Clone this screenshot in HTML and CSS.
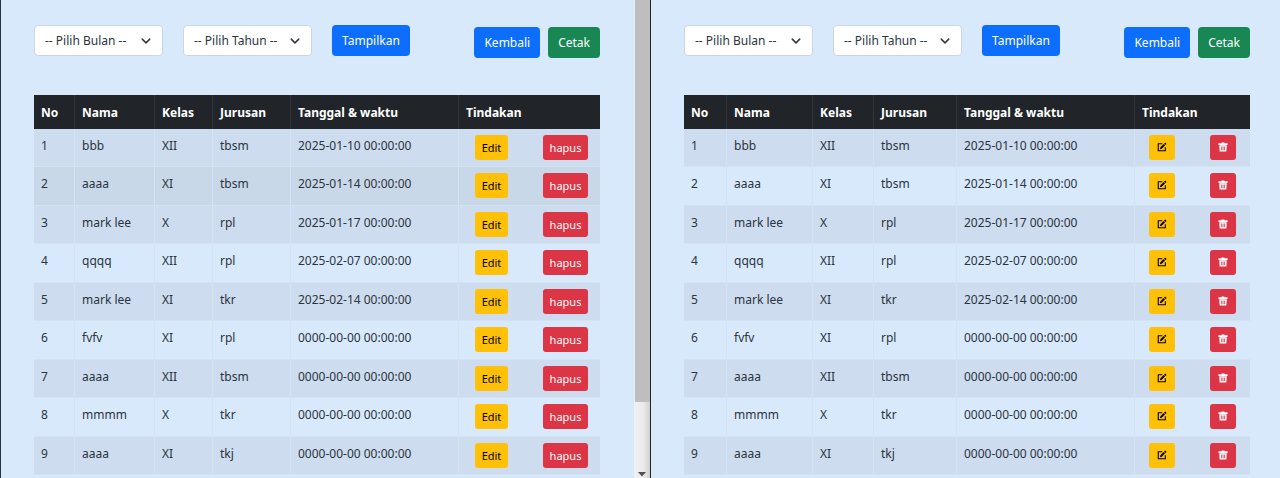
FILE: index.html
```
<!DOCTYPE html>
<html lang="id">
<head>
<meta charset="utf-8">
<title>Data Absensi</title>
<link rel="stylesheet" href="styles.css">
</head>
<body>
<svg class="sprite" aria-hidden="true">
  <symbol id="chevron" viewBox="0 0 16 16"><path d="m2 5 6 6 6-6" fill="none" stroke="#343a40" stroke-width="2.400" stroke-linecap="round" stroke-linejoin="round"/></symbol>
  <symbol id="pencil" viewBox="0 0 24 24"><path d="M12.500 4H3v17h17v-8.500" fill="none" stroke="currentColor" stroke-width="2.600"/><path d="M19.500 1 23 4.500 20.500 7 17 3.500zM16 4.500 19.500 8l-8 8-4.500 1.200L8.200 12.500z" fill="currentColor"/></symbol>
  <symbol id="trash" viewBox="0 0 24 24"><path fill="currentColor" fill-rule="evenodd" d="M9 1h6l1 2h7v4H1V3h7zM3 8h18l-1 15H4zM8 11v9h1.800v-9zm3.200 0v9H13v-9zm3.200 0v9h1.800v-9z"/></symbol>
</svg>
<div class="compare">
  <section class="pane pane-text">
    <main class="content">
      <div class="toolbar">
        <form class="filters">
          <label class="picker"><select aria-label="Bulan"><option>-- Pilih Bulan --</option></select><svg><use href="#chevron"/></svg></label>
          <label class="picker"><select aria-label="Tahun"><option>-- Pilih Tahun --</option></select><svg><use href="#chevron"/></svg></label>
          <button type="button" class="btn primary">Tampilkan</button>
        </form>
        <div class="links"><a href="#" class="btn primary">Kembali</a><a href="#" class="btn success">Cetak</a></div>
      </div>
      <table class="records">
        <colgroup><col class="no"><col class="name"><col class="grade"><col class="major"><col class="time"><col></colgroup>
        <thead><tr><th>No</th><th>Nama</th><th>Kelas</th><th>Jurusan</th><th>Tanggal &amp; waktu</th><th>Tindakan</th></tr></thead>
        <tbody>
          <tr><td>1</td><td>bbb</td><td>XII</td><td>tbsm</td><td>2025-01-10 00:00:00</td><td><div class="actions"><button class="btn small warning">Edit</button><button class="btn small danger">hapus</button></div></td></tr>
          <tr class="hovered"><td>2</td><td>aaaa</td><td>XI</td><td>tbsm</td><td>2025-01-14 00:00:00</td><td><div class="actions"><button class="btn small warning">Edit</button><button class="btn small danger">hapus</button></div></td></tr>
          <tr><td>3</td><td>mark lee</td><td>X</td><td>rpl</td><td>2025-01-17 00:00:00</td><td><div class="actions"><button class="btn small warning">Edit</button><button class="btn small danger">hapus</button></div></td></tr>
          <tr><td>4</td><td>qqqq</td><td>XII</td><td>rpl</td><td>2025-02-07 00:00:00</td><td><div class="actions"><button class="btn small warning">Edit</button><button class="btn small danger">hapus</button></div></td></tr>
          <tr><td>5</td><td>mark lee</td><td>XI</td><td>tkr</td><td>2025-02-14 00:00:00</td><td><div class="actions"><button class="btn small warning">Edit</button><button class="btn small danger">hapus</button></div></td></tr>
          <tr><td>6</td><td>fvfv</td><td>XI</td><td>rpl</td><td>0000-00-00 00:00:00</td><td><div class="actions"><button class="btn small warning">Edit</button><button class="btn small danger">hapus</button></div></td></tr>
          <tr><td>7</td><td>aaaa</td><td>XII</td><td>tbsm</td><td>0000-00-00 00:00:00</td><td><div class="actions"><button class="btn small warning">Edit</button><button class="btn small danger">hapus</button></div></td></tr>
          <tr><td>8</td><td>mmmm</td><td>X</td><td>tkr</td><td>0000-00-00 00:00:00</td><td><div class="actions"><button class="btn small warning">Edit</button><button class="btn small danger">hapus</button></div></td></tr>
          <tr><td>9</td><td>aaaa</td><td>XI</td><td>tkj</td><td>0000-00-00 00:00:00</td><td><div class="actions"><button class="btn small warning">Edit</button><button class="btn small danger">hapus</button></div></td></tr>
        </tbody>
      </table>
    </main>
    <div class="scrollbar"><div class="thumb"></div><svg class="arrow" viewBox="0 0 8 5"><path d="M0 0h8L4 4.500z" fill="#505050"/></svg></div>
  </section>
  <section class="pane pane-icons">
    <main class="content">
      <div class="toolbar">
        <form class="filters">
          <label class="picker"><select aria-label="Bulan"><option>-- Pilih Bulan --</option></select><svg><use href="#chevron"/></svg></label>
          <label class="picker"><select aria-label="Tahun"><option>-- Pilih Tahun --</option></select><svg><use href="#chevron"/></svg></label>
          <button type="button" class="btn primary">Tampilkan</button>
        </form>
        <div class="links"><a href="#" class="btn primary">Kembali</a><a href="#" class="btn success">Cetak</a></div>
      </div>
      <table class="records">
        <colgroup><col class="no"><col class="name"><col class="grade"><col class="major"><col class="time"><col></colgroup>
        <thead><tr><th>No</th><th>Nama</th><th>Kelas</th><th>Jurusan</th><th>Tanggal &amp; waktu</th><th>Tindakan</th></tr></thead>
        <tbody>
          <tr><td>1</td><td>bbb</td><td>XII</td><td>tbsm</td><td>2025-01-10 00:00:00</td><td><div class="actions"><button class="btn icon warning" aria-label="Edit"><svg><use href="#pencil"/></svg></button><button class="btn icon danger" aria-label="Hapus"><svg><use href="#trash"/></svg></button></div></td></tr>
          <tr><td>2</td><td>aaaa</td><td>XI</td><td>tbsm</td><td>2025-01-14 00:00:00</td><td><div class="actions"><button class="btn icon warning" aria-label="Edit"><svg><use href="#pencil"/></svg></button><button class="btn icon danger" aria-label="Hapus"><svg><use href="#trash"/></svg></button></div></td></tr>
          <tr><td>3</td><td>mark lee</td><td>X</td><td>rpl</td><td>2025-01-17 00:00:00</td><td><div class="actions"><button class="btn icon warning" aria-label="Edit"><svg><use href="#pencil"/></svg></button><button class="btn icon danger" aria-label="Hapus"><svg><use href="#trash"/></svg></button></div></td></tr>
          <tr><td>4</td><td>qqqq</td><td>XII</td><td>rpl</td><td>2025-02-07 00:00:00</td><td><div class="actions"><button class="btn icon warning" aria-label="Edit"><svg><use href="#pencil"/></svg></button><button class="btn icon danger" aria-label="Hapus"><svg><use href="#trash"/></svg></button></div></td></tr>
          <tr><td>5</td><td>mark lee</td><td>XI</td><td>tkr</td><td>2025-02-14 00:00:00</td><td><div class="actions"><button class="btn icon warning" aria-label="Edit"><svg><use href="#pencil"/></svg></button><button class="btn icon danger" aria-label="Hapus"><svg><use href="#trash"/></svg></button></div></td></tr>
          <tr><td>6</td><td>fvfv</td><td>XI</td><td>rpl</td><td>0000-00-00 00:00:00</td><td><div class="actions"><button class="btn icon warning" aria-label="Edit"><svg><use href="#pencil"/></svg></button><button class="btn icon danger" aria-label="Hapus"><svg><use href="#trash"/></svg></button></div></td></tr>
          <tr><td>7</td><td>aaaa</td><td>XII</td><td>tbsm</td><td>0000-00-00 00:00:00</td><td><div class="actions"><button class="btn icon warning" aria-label="Edit"><svg><use href="#pencil"/></svg></button><button class="btn icon danger" aria-label="Hapus"><svg><use href="#trash"/></svg></button></div></td></tr>
          <tr><td>8</td><td>mmmm</td><td>X</td><td>tkr</td><td>0000-00-00 00:00:00</td><td><div class="actions"><button class="btn icon warning" aria-label="Edit"><svg><use href="#pencil"/></svg></button><button class="btn icon danger" aria-label="Hapus"><svg><use href="#trash"/></svg></button></div></td></tr>
          <tr><td>9</td><td>aaaa</td><td>XI</td><td>tkj</td><td>0000-00-00 00:00:00</td><td><div class="actions"><button class="btn icon warning" aria-label="Edit"><svg><use href="#pencil"/></svg></button><button class="btn icon danger" aria-label="Hapus"><svg><use href="#trash"/></svg></button></div></td></tr>
        </tbody>
      </table>
    </main>
  </section>
</div>
</body>
</html>
```

FILE: styles.css
```
* { box-sizing: border-box; }

body {
  margin: 0;
  background: #d9e9fc;
  color: #2b3540;
  font: 12px/20px "Noto Sans", "Open Sans", sans-serif;
}

button, select { font: inherit; color: inherit; }

.sprite { display: none; }

.compare {
  display: grid;
  grid-template-columns: 651fr 629fr;
  min-height: 100vh;
}

.pane { display: flex; min-width: 0; }
.pane-text { border-left: 1px solid #25323f; border-right: 1px solid #202428; }

.content { flex: 1; min-width: 0; padding: 25px 34px 0 33px; }
.pane-icons .content { padding-right: 30px; }

.toolbar {
  display: flex;
  justify-content: space-between;
  align-items: flex-start;
  margin-bottom: 37px;
}

.filters { display: flex; gap: 20px; }
.links { display: flex; gap: 8px; padding-top: 2px; }

.picker { position: relative; display: block; }

.picker select {
  appearance: none;
  display: block;
  width: 129px;
  height: 31px;
  padding: 0 28px 0 10px;
  border: 1px solid #cbd6e2;
  border-radius: 4px;
  background: #fff;
}

.picker svg {
  position: absolute;
  right: 12px;
  top: 11px;
  width: 10px;
  height: 10px;
  pointer-events: none;
}

.btn {
  display: flex;
  align-items: center;
  justify-content: center;
  height: 31px;
  padding: 0 10px;
  border: 0;
  border-radius: 4px;
  color: #fff;
  text-decoration: none;
}

.primary { background: #0d6efd; }
.success { background: #198754; }
.danger { background: #dc3545; }
.warning { background: #ffc107; color: #000; }

.small { height: 25px; padding: 0; border-radius: 3px; font-size: 11px; }
.small.warning { width: 33px; }
.small.danger { width: 45px; }

.icon { width: 26px; height: 25px; padding: 0 0 2px; border-radius: 3px; }
.icon svg { width: 10px; height: 10px; }

.records {
  width: 100%;
  table-layout: fixed;
  border-spacing: 0;
}

.no { width: 41px; }
.name { width: 80px; }
.grade { width: 58px; }
.major { width: 78px; }
.time { width: 168px; }

.pane-icons .no { width: 43px; }
.pane-icons .name { width: 86px; }
.pane-icons .grade { width: 61px; }
.pane-icons .major { width: 83px; }
.pane-icons .time { width: 178px; }

.records th {
  height: 34px;
  padding: 2px 7px 0;
  background: #212529;
  border-right: 1px solid #30363b;
  color: #fff;
  font-weight: 700;
  text-align: left;
}

.records td {
  height: 38px;
  padding: 7px 7px 0;
  border-right: 1px solid #d4e3f3;
  border-bottom: 1px solid #d4e3f3;
  vertical-align: top;
}

.records tr > :last-child { border-right: 0; }
.records tbody tr:nth-child(odd) { background: #cddcee; }
.records tbody tr:nth-child(even) td { height: 39px; }
.records tbody .hovered { background: #c9d8e8; }

.records td:last-child { padding: 6px 0 0 16px; }
.pane-icons .records td:last-child { padding-left: 14px; }
.actions { display: flex; gap: 35px; }

.scrollbar {
  display: flex;
  flex-direction: column;
  align-items: center;
  width: 16px;
  background: linear-gradient(90deg, #f1f1f1, #eaeaea 60%, #d0d0d0);
}

.thumb { width: 100%; height: 84vh; background: #bebebe; border-left: 1px solid #e8edf2; }
.arrow { width: 8px; height: 5px; margin-top: auto; margin-bottom: 1px; }
```
